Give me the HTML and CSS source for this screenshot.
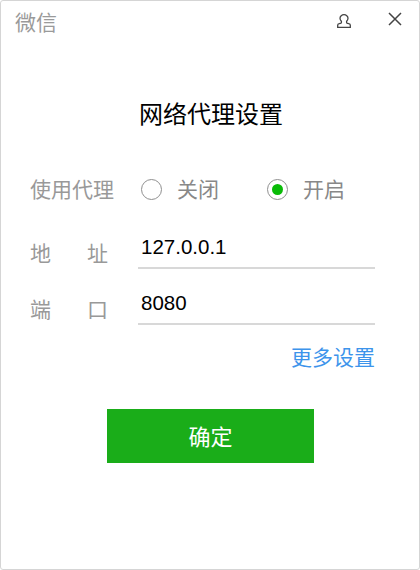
FILE: index.html
```html
<!DOCTYPE html>
<html lang="zh-CN">
<head>
    <meta charset="UTF-8">
    <title>微信</title>
    <link rel="stylesheet" href="styles.css">
</head>
<body>
    <div class="window">
        <div class="titlebar">
            <span class="app-name">微信</span>
            <svg class="icon-user" width="14" height="14" viewBox="0 0 14 14" fill="none" stroke="#444" stroke-width="1.300">
                <path d="M7 .7C4.900.7 3 2.100 3 4.200c0 1.300.6 2.300 1.400 3.100v1.100c0 .5-.3.8-.9.9l-1.300.3C1.200 9.800.7 10.400.7 11.200v2.100h12.600v-2.100c0-.8-.5-1.400-1.500-1.600l-1.300-.3c-.6-.1-.9-.4-.9-.9V7.300C10.400 6.500 11 5.500 11 4.200 11 2.100 9.100.7 7 .7z"/>
            </svg>
            <svg class="icon-close" width="14" height="14" viewBox="0 0 14 14" fill="none" stroke="#444" stroke-width="1.500">
                <path d="M1 1l12 12M13 1L1 13"/>
            </svg>
        </div>

        <h1 class="heading">网络代理设置</h1>

        <div class="form">
            <div class="row-proxy">
                <span class="label">使用代理</span>
                <div class="radios">
                    <label class="radio-item">
                        <span class="radio"></span>
                        <span class="radio-text">关闭</span>
                    </label>
                    <label class="radio-item">
                        <span class="radio checked"></span>
                        <span class="radio-text">开启</span>
                    </label>
                </div>
            </div>

            <div class="row-field first">
                <span class="label split"><span>地</span><span>址</span></span>
                <div class="field">127.0.0.1</div>
            </div>
            <div class="row-field">
                <span class="label split"><span>端</span><span>口</span></span>
                <div class="field">8080</div>
            </div>

            <div class="more-row"><a class="more" href="#">更多设置</a></div>
        </div>

        <div class="btn-row"><button class="ok-btn">确定</button></div>
    </div>
</body>
</html>
```

FILE: styles.css
```css
* { box-sizing: border-box; }
html, body { margin: 0; height: 100%; }
body { font-family: "Noto Sans CJK SC", "Liberation Sans", sans-serif; background: #fff; }
.window { height: 570px; border: 1px solid #d5d5d5; border-radius: 3px; background: #fff; }
.titlebar { display: flex; align-items: flex-start; height: 44px; padding: 0 17px 0 14px; }
.app-name { font-size: 21px; line-height: 40px; color: #9a9a9a; }
.icon-user { margin-left: auto; margin-top: 13px; }
.icon-close { margin-left: 37px; margin-top: 11px; }
.heading { margin: 51px 0 0; padding-left: 2px; font-size: 24px; line-height: 34px; font-weight: 400; color: #000; text-align: center; }
.form { padding: 0 44px 0 29px; }
.row-proxy { display: flex; align-items: center; height: 32px; margin-top: 43px; }
.row-proxy .label, .radio-text { margin-bottom: 2px; }
.label { flex: none; width: 84px; font-size: 21px; line-height: 32px; color: #999; white-space: nowrap; }
.split { display: flex; justify-content: space-between; width: 78px; }
.radios { display: flex; margin-left: 27px; }
.radio-item { display: flex; align-items: center; width: 126px; font-size: 21px; color: #888; gap: 15px; }
.radio { width: 21px; height: 21px; border: 1.500px solid #8f8f8f; border-radius: 50%; display: flex; align-items: center; justify-content: center; }
.radio.checked::after { content: ""; width: 11px; height: 11px; border-radius: 50%; background: #09bb07; }
.row-field { display: flex; align-items: flex-end; height: 56px; }
.row-field.first { margin-top: 8px; }
.row-field .label { line-height: 34px; }
.field { flex: 1; margin-left: 30px; height: 44px; padding-left: 3px; border-bottom: 2px solid #d8d8d8; font-family: "Liberation Sans", sans-serif; font-size: 20.500px; line-height: 44px; color: #000; }
.more-row { display: flex; justify-content: flex-end; margin-top: 15px; }
.more { font-size: 21px; line-height: 32px; color: #3d94eb; text-decoration: none; }
.btn-row { display: flex; justify-content: center; padding-left: 1px; margin-top: 37px; }
.ok-btn { width: 207px; height: 54px; border: none; background: #1aad19; color: #fff; font-family: inherit; font-size: 22px; line-height: 50px; padding: 0 0 2px; }
```
